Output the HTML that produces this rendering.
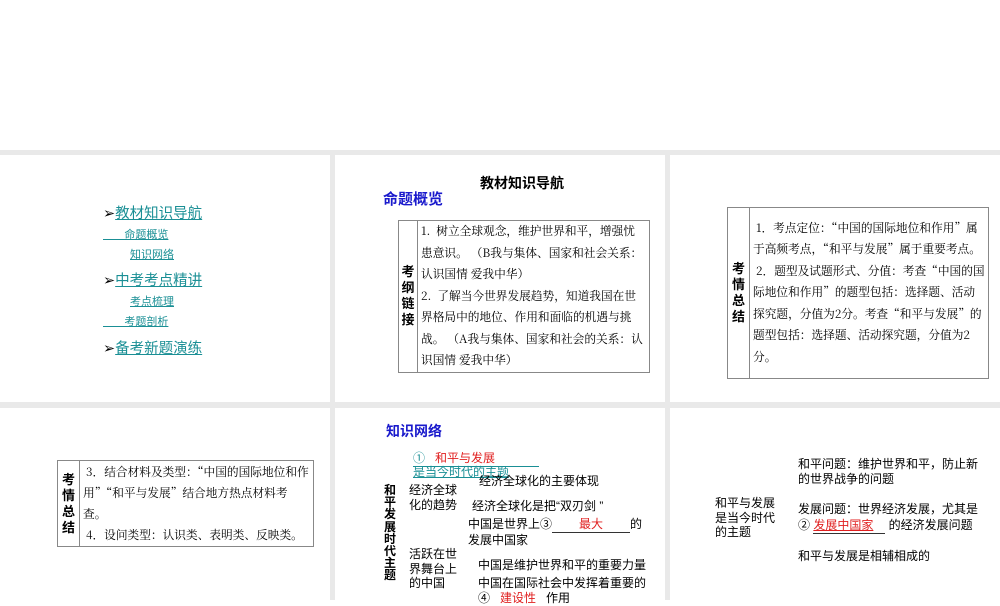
<!DOCTYPE html>
<html><head><meta charset="utf-8"><style>
*{margin:0;padding:0;box-sizing:border-box}
body{width:1000px;height:600px;background:#fff;position:relative;overflow:hidden;font-family:"Liberation Sans","Noto Sans CJK SC",sans-serif;color:#000}
.g{position:absolute;background:#e9e9e9}
.a{position:absolute;white-space:nowrap}
.lk{color:#1a8f95;text-decoration:underline}
table{border-collapse:collapse;position:absolute}
td{border:1px solid #888;vertical-align:middle}
.hd{font-weight:bold;font-size:13px;text-align:center;line-height:16px;padding:0 2px}
.bd{font-size:11.7px;line-height:21.5px;padding:0 3px;font-family:"Noto Serif CJK SC","Liberation Serif",serif;word-break:break-all}
</style></head><body>
<div class="g" style="left:0;top:150px;width:1000px;height:5px"></div>
<div class="g" style="left:0;top:402px;width:1000px;height:6px"></div>
<div class="g" style="left:330px;top:150px;width:5px;height:450px"></div>
<div class="g" style="left:665px;top:150px;width:5px;height:450px"></div>

<!-- panel 1 -->
<div class="a" style="left:103px;top:202px;font-size:14.5px">➢<span class="lk">教材知识导航</span></div>
<div class="a lk" style="left:103px;top:226px;font-size:11px">&nbsp;&nbsp;&nbsp;&nbsp;&nbsp;&nbsp;&nbsp;命题概览</div>
<div class="a lk" style="left:130px;top:246px;font-size:11px">知识网络</div>
<div class="a" style="left:103px;top:269px;font-size:14.5px">➢<span class="lk">中考考点精讲</span></div>
<div class="a lk" style="left:130px;top:293px;font-size:11px">考点梳理</div>
<div class="a lk" style="left:103px;top:313px;font-size:11px">&nbsp;&nbsp;&nbsp;&nbsp;&nbsp;&nbsp;&nbsp;考题剖析</div>
<div class="a" style="left:103px;top:337px;font-size:14.5px">➢<span class="lk">备考新题演练</span></div>

<!-- panel 2 -->
<div class="a" style="left:480px;top:173px;font-size:14px;font-weight:bold">教材知识导航</div>
<div class="a" style="left:383px;top:188px;font-size:15px;font-weight:bold;color:#1a1acc">命题概览</div>
<table style="left:398px;top:220px;width:252px;height:152px"><tr>
<td class="hd" style="width:19px">考<br>纲<br>链<br>接</td>
<td class="bd">1.&nbsp; 树立全球观念，维护世界和平，增强忧患意识。 （B我与集体、国家和社会关系：认识国情 爱我中华）<br>2.&nbsp; 了解当今世界发展趋势，知道我国在世界格局中的地位、作用和面临的机遇与挑战。 （A我与集体、国家和社会的关系：认识国情 爱我中华）</td></tr></table>

<!-- panel 3 -->
<table style="left:727px;top:207px;width:262px;height:172px"><tr>
<td class="hd" style="width:22px">考<br>情<br>总<br>结</td>
<td class="bd">&nbsp;1．考点定位：“中国的国际地位和作用”属于高频考点，“和平与发展”属于重要考点。<br>&nbsp;2．题型及试题形式、分值：考查“中国的国际地位和作用”的题型包括：选择题、活动探究题，分值为2分。考查“和平与发展”的题型包括：选择题、活动探究题，分值为2分。</td></tr></table>

<!-- panel 4 -->
<table style="left:57px;top:460px;width:257px;height:87px"><tr>
<td class="hd" style="width:22px">考<br>情<br>总<br>结</td>
<td class="bd" style="line-height:21px">&nbsp;3．结合材料及类型：“中国的国际地位和作用”“和平与发展”结合地方热点材料考查。<br>&nbsp;4．设问类型：认识类、表明类、反映类。</td></tr></table>

<!-- panel 5 -->
<div class="a" style="left:386px;top:421px;font-size:14px;font-weight:bold;color:#1a1acc">知识网络</div>
<div class="a" style="left:413px;top:449px;font-size:12px;color:#1a8f95;border-bottom:1px solid #1a8f95;width:126px">①&nbsp;&nbsp; <span style="color:#e02020">和平与发展</span></div>
<div class="a" style="left:413px;top:463px;font-size:12px;color:#1a8f95;text-decoration:underline">是当今时代的主题</div>
<div class="a" style="left:479px;top:472px;font-size:12px">经济全球化的主要体现</div>
<div class="a" style="left:384px;top:484px;font-size:12px;font-weight:bold;line-height:12.2px;white-space:normal;width:13px">和平发展时代主题</div>
<div class="a" style="left:409px;top:483px;font-size:12px;line-height:15px">经济全球<br>化的趋势</div>
<div class="a" style="left:472px;top:497px;font-size:12px">经济全球化是把“双刃剑 ”</div>
<div class="a" style="left:468px;top:517px;font-size:12px;line-height:15px">中国是世界上③<span style="display:inline-block;width:78px;border-bottom:1px solid #333;text-align:center;color:#e02020">最大</span>的<br>发展中国家</div>
<div class="a" style="left:409px;top:547px;font-size:12px;line-height:14.5px">活跃在世<br>界舞台上<br>的中国</div>
<div class="a" style="left:478px;top:556px;font-size:12px">中国是维护世界和平的重要力量</div>
<div class="a" style="left:478px;top:576px;font-size:12px;line-height:15px">中国在国际社会中发挥着重要的<br>④&nbsp;&nbsp; <span style="color:#e02020">建设性</span>&nbsp;&nbsp; 作用</div>

<!-- panel 6 -->
<div class="a" style="left:798px;top:457px;font-size:12px;line-height:15px">和平问题：维护世界和平，防止新<br>的世界战争的问题</div>
<div class="a" style="left:715px;top:496px;font-size:12px;line-height:14.5px">和平与发展<br>是当今时代<br>的主题</div>
<div class="a" style="left:798px;top:501px;font-size:12px;line-height:16px">发展问题：世界经济发展，尤其是<br>② <span style="display:inline-block;width:72px;border-bottom:1px solid #333;color:#e02020;text-decoration:underline">发展中国家</span> 的经济发展问题</div>
<div class="a" style="left:798px;top:547px;font-size:12px">和平与发展是相辅相成的</div>
</body></html>
